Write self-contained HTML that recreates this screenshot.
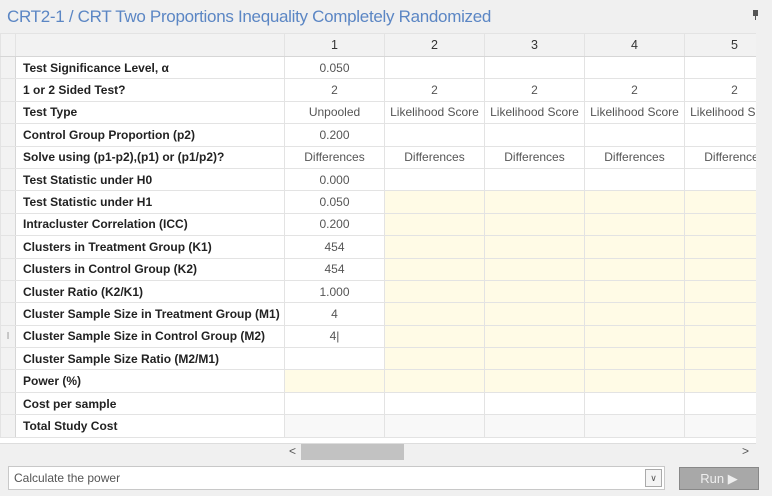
<!DOCTYPE html>
<html><head><meta charset="utf-8"><style>
body{margin:0;width:772px;height:496px;background:#f0f0f0;font-family:"Liberation Sans",sans-serif;position:relative;overflow:hidden}
.title{position:absolute;left:7px;top:7px;font-size:17px;color:#5b86c4;letter-spacing:-0.3px}
.pin{position:absolute;left:753px;top:10px;width:5px;height:6px;background:#555}
.pin:after{content:"";position:absolute;left:2px;top:6px;width:1px;height:4px;background:#555}
.gridwrap{position:absolute;left:0;top:33px;width:756px;height:410px;overflow:hidden;background:#fff}
table{border-collapse:collapse;table-layout:fixed;font-size:12px;width:785px}
td{border:1px solid #e3e3e3;height:21.4px;padding:0;white-space:nowrap;overflow:hidden;text-align:center;color:#555}
td.rh{background:#f2f2f2;border-right:1px solid #d6d6d6}
td.l{text-align:left;padding-left:7px;font-weight:bold;color:#222}
tr.h td{background:#f2f2f2;height:22px;color:#333;border-bottom:1px solid #d6d6d6;font-size:12.5px}
td.y{background:#fffbe6}
td.g{background:#f8f8f8}
.c1{border-left:1px solid #d6d6d6}
.vs{position:absolute;left:756px;top:56px;width:16px;height:387px;background:#f0f0f0}
.hs{position:absolute;left:0;top:443px;width:756px;height:17px;background:#f0f0f0;border-top:1px solid #ddd}
.thumb{position:absolute;left:301px;top:444px;width:103px;height:16px;background:#c2c2c2}
.sel{position:absolute;left:8px;top:466px;width:655px;height:22px;background:#fff;border:1px solid #c8c8c8;font-size:12px;color:#555;line-height:22px;text-indent:5px}
.dd{position:absolute;right:2px;top:2px;width:15px;height:16px;border:1px solid #aaa;background:#f4f4f4;font-size:9px;line-height:16px;text-align:center;text-indent:0}
.run{position:absolute;left:679px;top:467px;width:78px;height:21px;background:#a8a8a8;border:1px solid #888;color:#eee;font-size:13px;line-height:21px;text-align:center}
</style></head><body>
<div class="title">CRT2-1 / CRT Two Proportions Inequality Completely Randomized</div>
<div class="pin"></div>
<div class="gridwrap"><table>
<colgroup><col style="width:15px"><col style="width:269px"><col style="width:100px"><col style="width:100px"><col style="width:100px"><col style="width:100px"><col style="width:100px"></colgroup>
<tr class="h"><td></td><td></td><td class="c1">1</td><td>2</td><td>3</td><td>4</td><td>5</td></tr>
<tr><td class="rh"></td><td class="l">Test Significance Level, α</td><td class="c1">0.050</td><td></td><td></td><td></td><td></td></tr>
<tr><td class="rh"></td><td class="l">1 or 2 Sided Test?</td><td class="c1">2</td><td>2</td><td>2</td><td>2</td><td>2</td></tr>
<tr><td class="rh"></td><td class="l">Test Type</td><td class="c1">Unpooled</td><td>Likelihood Score</td><td>Likelihood Score</td><td>Likelihood Score</td><td>Likelihood Score</td></tr>
<tr><td class="rh"></td><td class="l">Control Group Proportion (p2)</td><td class="c1">0.200</td><td></td><td></td><td></td><td></td></tr>
<tr><td class="rh"></td><td class="l">Solve using (p1-p2),(p1) or (p1/p2)?</td><td class="c1">Differences</td><td>Differences</td><td>Differences</td><td>Differences</td><td>Differences</td></tr>
<tr><td class="rh"></td><td class="l">Test Statistic under H0</td><td class="c1">0.000</td><td></td><td></td><td></td><td></td></tr>
<tr><td class="rh"></td><td class="l">Test Statistic under H1</td><td class="c1">0.050</td><td class="y"></td><td class="y"></td><td class="y"></td><td class="y"></td></tr>
<tr><td class="rh"></td><td class="l">Intracluster Correlation (ICC)</td><td class="c1">0.200</td><td class="y"></td><td class="y"></td><td class="y"></td><td class="y"></td></tr>
<tr><td class="rh"></td><td class="l">Clusters in Treatment Group (K1)</td><td class="c1">454</td><td class="y"></td><td class="y"></td><td class="y"></td><td class="y"></td></tr>
<tr><td class="rh"></td><td class="l">Clusters in Control Group (K2)</td><td class="c1">454</td><td class="y"></td><td class="y"></td><td class="y"></td><td class="y"></td></tr>
<tr><td class="rh"></td><td class="l">Cluster Ratio (K2/K1)</td><td class="c1">1.000</td><td class="y"></td><td class="y"></td><td class="y"></td><td class="y"></td></tr>
<tr><td class="rh"></td><td class="l">Cluster Sample Size in Treatment Group (M1)</td><td class="c1">4</td><td class="y"></td><td class="y"></td><td class="y"></td><td class="y"></td></tr>
<tr><td class="rh" style="color:#999;font-size:10px">I</td><td class="l">Cluster Sample Size in Control Group (M2)</td><td class="c1">4|</td><td class="y"></td><td class="y"></td><td class="y"></td><td class="y"></td></tr>
<tr><td class="rh"></td><td class="l">Cluster Sample Size Ratio (M2/M1)</td><td class="c1"></td><td class="y"></td><td class="y"></td><td class="y"></td><td class="y"></td></tr>
<tr><td class="rh"></td><td class="l">Power (%)</td><td class="c1 y"></td><td class="y"></td><td class="y"></td><td class="y"></td><td class="y"></td></tr>
<tr><td class="rh"></td><td class="l">Cost per sample</td><td class="c1"></td><td></td><td></td><td></td><td></td></tr>
<tr><td class="rh"></td><td class="l">Total Study Cost</td><td class="c1 g"></td><td class="g"></td><td class="g"></td><td class="g"></td><td class="g"></td></tr>
</table></div>
<div class="vs"></div>
<div class="hs"><span style="position:absolute;left:289px;top:0;font-size:12px;color:#555">&lt;</span><span style="position:absolute;left:742px;top:0;font-size:12px;color:#555">&gt;</span></div>
<div class="thumb"></div>
<div class="sel">Calculate the power<div class="dd">&#8744;</div></div>
<div class="run">Run &#9654;</div>
</body></html>
